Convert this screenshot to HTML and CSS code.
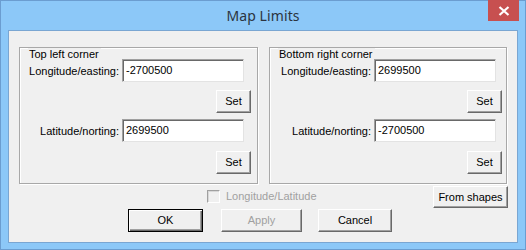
FILE: index.html
```html
<!DOCTYPE html>
<html>
<head>
<meta charset="utf-8">
<link rel="stylesheet" href="styles.css">
</head>
<body>
<div class="window">
  <div class="titlebar">
    <div class="title">Map Limits</div>
    <div class="close"><svg width="12" height="10" viewBox="0 0 12 10"><path d="M1.5 1 L10.5 9 M10.5 1 L1.5 9" stroke="#fff" stroke-width="2.2" fill="none"/></svg></div>
  </div>
  <div class="client">
    <div class="groups">
      <div class="group g1">
        <div class="legend">Top left corner</div>
        <div class="row field"><span class="lbl">Longitude/easting:</span><div class="input">-2700500</div></div>
        <div class="row setrow"><div class="btn set">Set</div></div>
        <div class="row field f2"><span class="lbl">Latitude/norting:</span><div class="input">2699500</div></div>
        <div class="row setrow s2"><div class="btn set">Set</div></div>
      </div>
      <div class="group g2">
        <div class="legend">Bottom right corner</div>
        <div class="row field"><span class="lbl">Longitude/easting:</span><div class="input">2699500</div></div>
        <div class="row setrow"><div class="btn set">Set</div></div>
        <div class="row field f2"><span class="lbl">Latitude/norting:</span><div class="input">-2700500</div></div>
        <div class="row setrow s2"><div class="btn set">Set</div></div>
      </div>
    </div>
    <div class="optrow">
      <div class="check"><span class="box"></span><span>Longitude/Latitude</span></div>
      <div class="btn shapes">From shapes</div>
    </div>
    <div class="btnrow">
      <div class="btn ok">OK</div>
      <div class="btn apply disabled">Apply</div>
      <div class="btn cancel">Cancel</div>
    </div>
  </div>
</div>
</body>
</html>
```
FILE: styles.css
```css
* { box-sizing: border-box; }
html, body { margin: 0; padding: 0; }
body { width: 526px; height: 250px; overflow: hidden; background: #8cc8f8; }
.window {
  width: 526px; height: 250px;
  background: #8cc8f8;
  border: 1px solid #6b9dd0;
  display: flex; flex-direction: column;
}
.titlebar {
  height: 29px;
  position: relative;
  display: flex; justify-content: center; align-items: center;
}
.title {
  font-family: "Noto Sans", "Open Sans", sans-serif;
  font-size: 14px;
  color: #2b3440;
  margin-top: -1px;
  letter-spacing: 0.1px;
}
.close {
  position: absolute; top: -1px; right: 6px;
  width: 31px; height: 21px;
  background: #c75050;
  display: flex; align-items: center; justify-content: center;
}
.client {
  margin: 0 7px 0 7px;
  height: 213px;
  background: #f0f0f0;
  border: 1px solid #7aa6d2;
  font-family: "Liberation Sans", Arial, sans-serif;
  font-size: 11px;
  color: #000;
  padding: 16px 0 0 10px;
}
.groups { display: flex; gap: 11px; }
.group {
  border: 1px solid #a8a8a8;
  box-shadow: inset 1px 1px 0 #fff, 1px 1px 0 #fff;
  height: 137px;
  padding-top: 0;
}
.g1 { width: 239px; }
.g2 { width: 238px; }
.legend {
  margin: -7px 0 0 8px;
  padding: 0 2px 0 1px;
  background: #f0f0f0;
  display: inline-block;
  line-height: 13px;
  height: 13px;
}
.row { display: flex; justify-content: flex-end; align-items: center; }
.field { margin-top: -2px; padding-right: 13px; height: 23px; }
.g2 .field { padding-right: 10px; }
.f2 { margin-top: 6px; }
.lbl { margin-right: 3px; }
.input {
  width: 122px; height: 23px;
  background: #fff;
  border-top: 1px solid #a0a0a0;
  border-left: 1px solid #a0a0a0;
  border-right: 1px solid #e3e3e3;
  border-bottom: 1px solid #e3e3e3;
  box-shadow: inset 1px 1px 0 #696969;
  padding: 3px 0 0 3px;
  line-height: 14px;
  white-space: nowrap;
}
.setrow { margin-top: 8px; padding-right: 6px; }
.g2 .setrow { padding-right: 4px; }
.s2 { margin-top: 9px; }
.btn {
  height: 23px;
  background: #f0f0f0;
  border-top: 1px solid #fff;
  border-left: 1px solid #fff;
  border-right: 1px solid #696969;
  border-bottom: 1px solid #696969;
  box-shadow: inset -1px -1px 0 #a0a0a0;
  display: flex; align-items: center; justify-content: center;
  padding-bottom: 1px;
}
.set { width: 35px; }
.optrow {
  display: flex; align-items: center;
  margin-top: 2px;
  height: 22px;
}
.check {
  display: flex; align-items: center;
  margin-left: 188px;
  color: #a0a0a0;
  margin-top: -2px;
}
.box {
  width: 13px; height: 13px;
  border-top: 1px solid #a0a0a0;
  border-left: 1px solid #a0a0a0;
  border-right: 1px solid #fff;
  border-bottom: 1px solid #fff;
  box-shadow: inset 1px 1px 0 #d8d8d8;
  background: #f0f0f0;
  margin-right: 6px;
}
.shapes { width: 75px; margin-left: auto; margin-right: 9px; height: 22px; }
.btnrow { display: flex; margin-top: 1px; padding-left: 109px; }
.ok {
  width: 75px;
  border: 1px solid #000;
  box-shadow: inset 1px 1px 0 #fff, inset -1px -1px 0 #696969, inset -2px -2px 0 #a0a0a0;
}
.apply { width: 81px; margin-left: 18px; color: #a0a0a0; }
.cancel { width: 74px; margin-left: 16px; }
```
